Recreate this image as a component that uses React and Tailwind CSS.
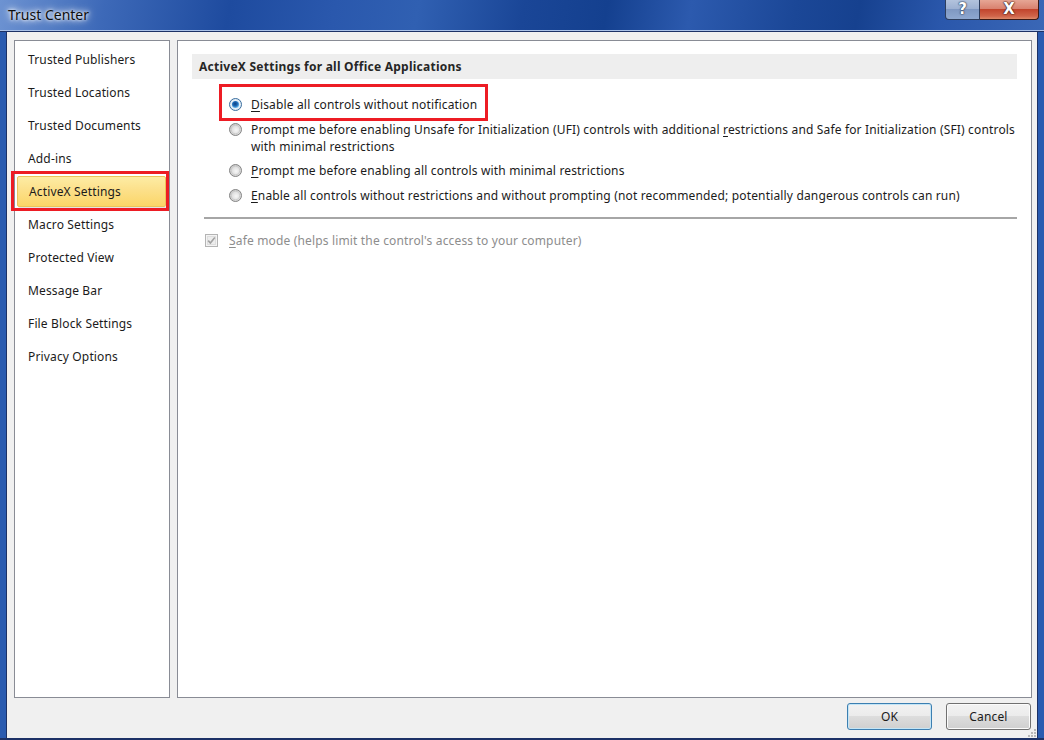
import React from "react";

function Radio({ checked }) {
  return (
    <svg width="13" height="13" viewBox="0 0 13 13" className="shrink-0">
      <defs>
        <radialGradient id="rfill" cx="0.55" cy="0.55" r="0.6">
          <stop offset="0" stopColor="#f7f7f7" />
          <stop offset="0.55" stopColor="#e0e0e0" />
          <stop offset="1" stopColor="#bdbdbd" />
        </radialGradient>
        <radialGradient id="rfillsel" cx="0.5" cy="0.5" r="0.6">
          <stop offset="0" stopColor="#ffffff" />
          <stop offset="1" stopColor="#d5e4f1" />
        </radialGradient>
        <radialGradient id="rdot" cx="0.45" cy="0.4" r="0.6">
          <stop offset="0" stopColor="#0c3f80" />
          <stop offset="0.55" stopColor="#1f6bb8" />
          <stop offset="1" stopColor="#74c3f2" />
        </radialGradient>
      </defs>
      {checked ? (
        <>
          <circle cx="6.5" cy="6.5" r="6" fill="url(#rfillsel)" stroke="#3b6e9e" strokeWidth="1" />
          <circle cx="6.5" cy="6.5" r="3.6" fill="url(#rdot)" />
        </>
      ) : (
        <>
          <circle cx="6.5" cy="6.5" r="6" fill="url(#rfill)" stroke="#858585" strokeWidth="1" />
          <circle cx="6.5" cy="6.5" r="4.3" fill="none" stroke="#c8c8c8" strokeWidth="0.9" />
        </>
      )}
    </svg>
  );
}

function Checkbox() {
  return (
    <svg width="13" height="13" viewBox="0 0 13 13" className="shrink-0">
      <rect x="0.5" y="0.5" width="12" height="12" fill="#f4f4f4" stroke="#b4b4b4" />
      <rect x="2.5" y="2.5" width="8" height="8" fill="#ededed" stroke="#dedede" />
      <path d="M3.2 6.6 L5.4 9 L9.8 3.6" fill="none" stroke="#a2a2a2" strokeWidth="1.6" />
    </svg>
  );
}

const navItems = [
  "Trusted Publishers",
  "Trusted Locations",
  "Trusted Documents",
  "Add-ins",
  "ActiveX Settings",
  "Macro Settings",
  "Protected View",
  "Message Bar",
  "File Block Settings",
  "Privacy Options",
];

function WinButton({ children, focused }) {
  return (
    <div
      className={
        "w-[85px] h-[27px] rounded-[3px] border flex items-center justify-center pt-[1px] text-[12px] tracking-[0.15px] text-[#1b1b1b] " +
        (focused
          ? "border-[#3c7fb1] shadow-[inset_0_0_0_1px_#c4e5f6] bg-[linear-gradient(to_bottom,#f2f2f2_0%,#ebebeb_50%,#dddddd_50%,#cfcfcf_100%)]"
          : "border-[#707070] shadow-[inset_0_0_0_1px_#fbfbfb] bg-[linear-gradient(to_bottom,#f2f2f2_0%,#ebebeb_50%,#dddddd_50%,#cfcfcf_100%)]")
      }
    >
      {children}
    </div>
  );
}

export default function App() {
  return (
    <div className="w-[1044px] h-[740px] flex flex-col bg-[#2a5bb0] font-['Noto_Sans',sans-serif] overflow-hidden select-none">
      {/* Title bar */}
      <div className="relative h-[30px] shrink-0 flex items-center bg-[linear-gradient(100deg,#6d93d2_0%,#3d69b8_10%,#1e4b9f_22%,#2a58ad_32%,#3060b2_40%,#1a4697_50%,#14408f_58%,#2c5aae_66%,#1b4797_76%,#16418f_82%,#2a57ab_90%,#3a67b6_100%)]">
        <span className="ml-[8px] text-[14px] leading-none text-[#0d0d0d] [text-shadow:0_0_6px_#ffffff,0_0_10px_#ffffff,0_0_3px_#ffffff]">
          Trust Center
        </span>
        <div className="absolute top-0 right-[5px] flex">
          <div className="w-[35px] h-[20px] border border-[#2d3e5e] border-t-0 rounded-bl-[4px] bg-[linear-gradient(to_bottom,#b3c3dd_0%,#9db1d2_45%,#7f98c2_50%,#8ea8d0_100%)] flex items-center justify-center">
            <span className="font-['DejaVu_Sans',sans-serif] font-bold text-[15px] leading-none text-white [text-shadow:0_0_1px_#2b3a55,0_0_1px_#2b3a55,0_0_2px_#2b3a55]">
              ?
            </span>
          </div>
          <div className="w-[59px] h-[20px] border border-[#3b1a16] border-t-0 border-l-0 rounded-br-[4px] bg-[linear-gradient(to_bottom,#e6a695_0%,#d98270_45%,#c2452d_50%,#d0644a_85%,#de8a6a_100%)] flex items-center justify-center">
            <span className="font-['DejaVu_Sans',sans-serif] font-bold text-[15px] leading-none text-white [text-shadow:0_0_1px_#3b1a16,0_0_1px_#3b1a16,0_0_2px_#3b1a16]">
              X
            </span>
          </div>
        </div>
      </div>
      <div className="h-[1px] bg-[#a9c1e8] shrink-0" />
      <div className="h-[1px] bg-[#1c3166] shrink-0" />

      {/* Body with frames */}
      <div className="flex flex-1 min-h-0">
        <div className="w-[6px] shrink-0 bg-[#2a5bb0]" />
        <div className="w-[1px] shrink-0 bg-[#1c3166]" />
        <div className="flex-1 flex flex-col bg-[#f0f0f0] pt-[8px] pl-[7px] pr-[5px]">
          <div className="flex gap-[7px] h-[658px] shrink-0">
            {/* Left nav */}
            <div className="w-[156px] h-full bg-white border border-[#898c95] pt-[2px] pr-[2px]">
              {navItems.map((item) => {
                const sel = item === "ActiveX Settings";
                return (
                  <div key={item} className="relative h-[33px] flex items-stretch tracking-[0.15px]">
                    {sel ? (
                      <>
                        <div className="flex-1 my-[1px] ml-[2px] mr-[1px] flex items-center pl-[11px] rounded-[2px] border border-[#ecc45a] bg-[linear-gradient(to_bottom,#fdeca4_0%,#fce08a_45%,#fbd668_100%)] shadow-[1px_1px_1px_rgba(0,0,0,0.12)] text-[12px] text-[#1b1b1b]">
                          {item}
                        </div>
                        <div className="absolute top-[-4px] bottom-[-3px] left-[-4px] right-[-2px] border-[3px] border-[#ed1c24]" />
                      </>
                    ) : (
                      <div className="flex-1 flex items-center pl-[13px] text-[12px] text-[#1b1b1b]">
                        {item}
                      </div>
                    )}
                  </div>
                );
              })}
            </div>

            {/* Right panel */}
            <div className="flex-1 h-full bg-white border border-[#898c95] pt-[13px] px-[14px]">
              <div className="h-[25px] bg-[#eeeeee] flex items-center pl-[7px] text-[12px] font-bold tracking-[0.25px] text-[#262626]">
                ActiveX Settings for all Office Applications
              </div>

              <div className="mt-[17px] pl-[37px] flex flex-col text-[12px] tracking-[0.16px] leading-[17px] text-[#1b1b1b]">
                <div className="flex">
                  <div className="relative flex items-start gap-[9px]">
                    <div className="mt-[2px]"><Radio checked /></div>
                    <span className="whitespace-nowrap">
                      <span className="underline underline-offset-[2px]">D</span>isable all controls without notification
                    </span>
                    <div className="absolute top-[-12px] bottom-[-8px] left-[-10px] right-[-11px] border-[3px] border-[#ed1c24]" />
                  </div>
                </div>
                <div className="mt-[8px] flex items-start gap-[9px]">
                  <div className="mt-[2px]"><Radio /></div>
                  <span className="whitespace-nowrap">
                    Prompt me before enabling Unsafe for Initialization (UFI) controls with additional{" "}
                    <span className="underline underline-offset-[2px]">r</span>estrictions and Safe for Initialization (SFI) controls
                    <br />
                    with minimal restrictions
                  </span>
                </div>
                <div className="mt-[7px] flex items-start gap-[9px]">
                  <div className="mt-[2px]"><Radio /></div>
                  <span className="whitespace-nowrap">
                    <span className="underline underline-offset-[2px]">P</span>rompt me before enabling all controls with minimal restrictions
                  </span>
                </div>
                <div className="mt-[8px] flex items-start gap-[9px]">
                  <div className="mt-[2px]"><Radio /></div>
                  <span className="whitespace-nowrap">
                    <span className="underline underline-offset-[2px]">E</span>nable all controls without restrictions and without prompting (not recommended; potentially dangerous controls can run)
                  </span>
                </div>
              </div>

              <div className="mt-[13px] ml-[12px] h-[2px] bg-[#a6a6a6]" />

              <div className="mt-[13px] ml-[13px] flex items-center gap-[11px] text-[12px] tracking-[0.16px] leading-[17px] text-[#8d8d8d]">
                <Checkbox />
                <span className="whitespace-nowrap">
                  <span className="underline underline-offset-[2px]">S</span>afe mode (helps limit the control's access to your computer)
                </span>
              </div>
            </div>
          </div>

          {/* Buttons */}
          <div className="mt-[5px] flex justify-end gap-[14px] pr-[1px]">
            <WinButton focused>OK</WinButton>
            <WinButton>Cancel</WinButton>
          </div>
          <div className="flex-1 relative">
            <div className="absolute right-[-4px] bottom-[1px] grid grid-cols-3 gap-[1px]">
              <span className="w-[2px] h-[2px]" />
              <span className="w-[2px] h-[2px]" />
              <span className="w-[2px] h-[2px] bg-[#b8b8b8]" />
              <span className="w-[2px] h-[2px]" />
              <span className="w-[2px] h-[2px] bg-[#b8b8b8]" />
              <span className="w-[2px] h-[2px] bg-[#b8b8b8]" />
              <span className="w-[2px] h-[2px] bg-[#b8b8b8]" />
              <span className="w-[2px] h-[2px] bg-[#b8b8b8]" />
              <span className="w-[2px] h-[2px] bg-[#b8b8b8]" />
            </div>
          </div>
        </div>
        <div className="w-[1px] shrink-0 bg-[#1c3166]" />
        <div className="w-[6px] shrink-0 bg-[#2a5bb0]" />
      </div>
      <div className="h-[2px] shrink-0 bg-[#1c3166]" />
    </div>
  );
}
